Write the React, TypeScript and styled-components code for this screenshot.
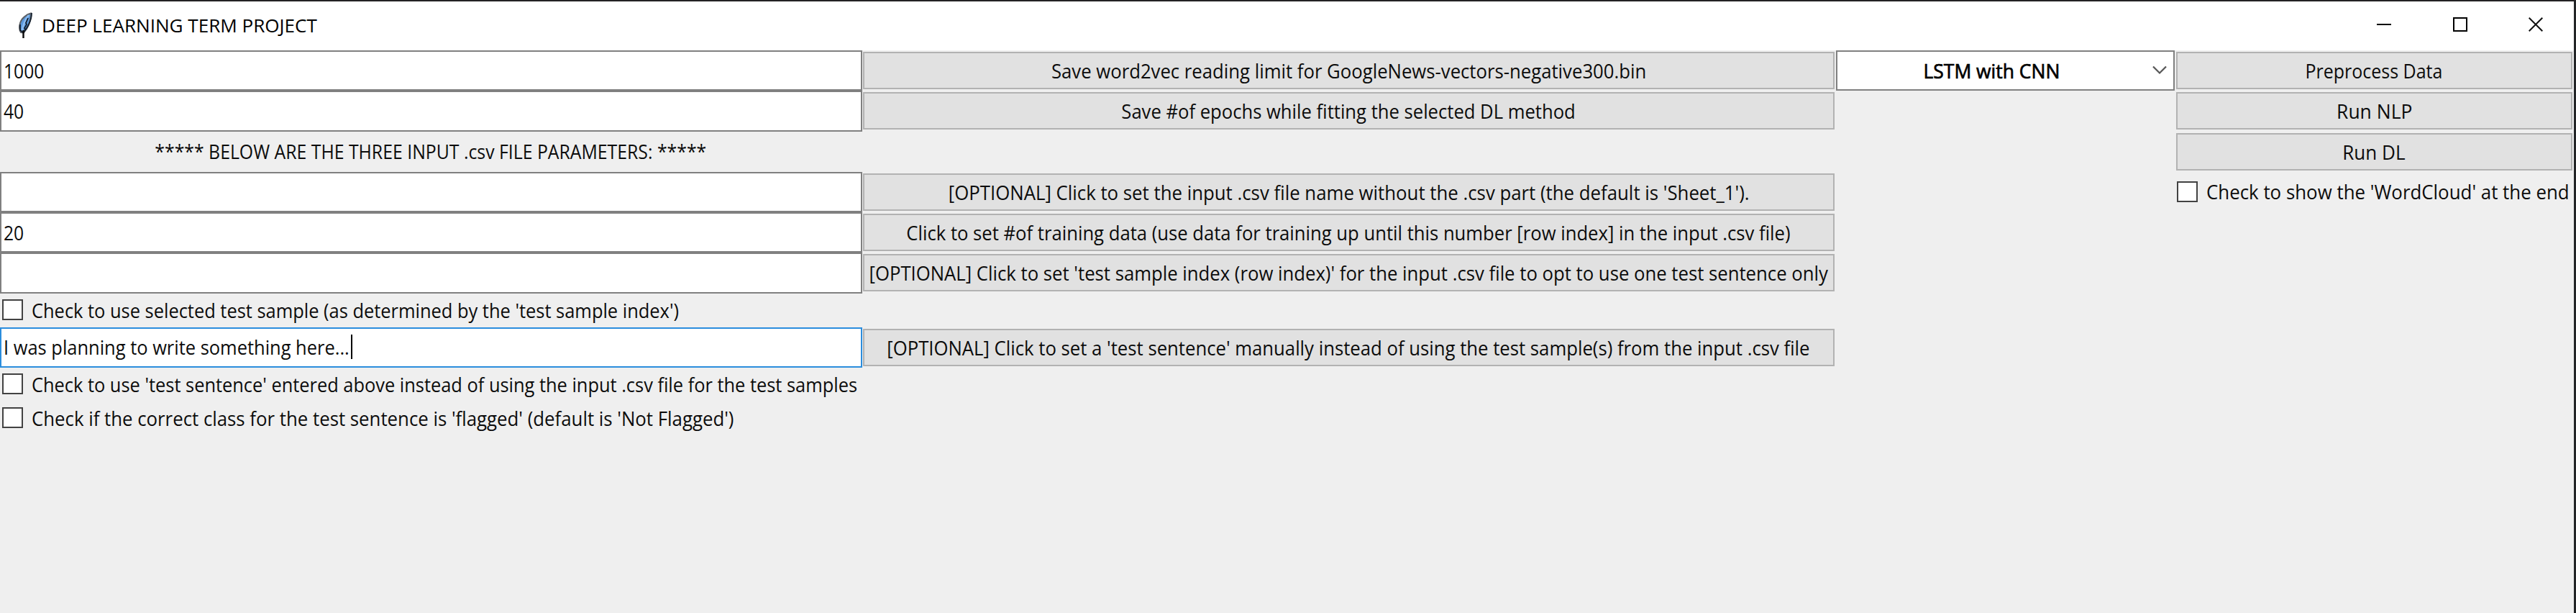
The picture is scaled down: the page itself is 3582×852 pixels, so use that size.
import React from 'react';
import styled, { createGlobalStyle } from 'styled-components';

const GlobalStyle = createGlobalStyle`
  body {
    margin: 0;
    background: #efefef;
    font-family: 'Open Sans', 'Noto Sans', sans-serif;
    font-size: 28px;
    color: #0c0c0c;
  }
`;

const Window = styled.main`
  box-sizing: border-box;
  width: 3582px;
  height: 852px;
  overflow: hidden;
  background: #efefef;
  border-top: 2px solid #232224;
  border-right: 3px solid #232527;
`;

const TitleBar = styled.header`
  display: flex;
  align-items: center;
  height: 68px;
  box-sizing: border-box;
  padding-left: 24px;
  background: #fff;
  color: #000;
  font-size: 26px;
`;

const Title = styled.h1`
  flex: 1;
  margin: 0 0 0 11px;
  padding-bottom: 3px;
  font-size: inherit;
  font-weight: 400;
  line-height: 36px;
`;

const Controls = styled.nav`
  display: flex;
  align-items: center;
  gap: 85.5px;
  padding: 0 43px 4px 0;
`;

const Glyph = styled.svg`
  display: block;
  fill: none;
`;

const Form = styled.section`
  display: grid;
  grid-template-columns: 1198.5px 1354px 471.5px 555px;
  grid-template-rows: repeat(6, 56.25px) 47px 56.25px 47px 47px;
`;

const Text = styled.span<{ $squeeze: number; $left?: boolean }>`
  display: inline-block;
  flex: none;
  white-space: nowrap;
  line-height: 36px;
  transform: scaleX(${(p) => p.$squeeze});
  transform-origin: ${(p) => (p.$left ? 'left' : 'center')};
`;

const Entry = styled.div<{ $row: number; $focused?: boolean }>`
  grid-column: 1;
  grid-row: ${(p) => p.$row};
  display: flex;
  align-items: center;
  box-sizing: border-box;
  padding: 0 0 1px 3px;
  background: #fff;
  border: 2px solid ${(p) => (p.$focused ? '#2b8ddd' : '#808080')};
`;

const EntryValue = styled.div<{ $width: number }>`
  display: flex;
  width: ${(p) => p.$width}px;
`;

const Caret = styled.i`
  width: 2px;
  height: 34px;
  background: #000;
`;

const Heading = styled.div`
  grid-column: 1;
  grid-row: 3;
  display: flex;
  align-items: center;
  justify-content: center;
  padding-bottom: 1px;
`;

const Button = styled.button<{ $column: number; $row: number }>`
  grid-column: ${(p) => p.$column};
  grid-row: ${(p) => p.$row};
  display: flex;
  align-items: center;
  justify-content: center;
  box-sizing: border-box;
  min-width: 0;
  margin: 2px 1.75px 2.25px 1.5px;
  padding: 0;
  background: #e1e1e1;
  border: 2px solid #b2b2b2;
  color: inherit;
  font: inherit;
`;

const Combo = styled.div`
  grid-column: 3;
  grid-row: 1;
  display: flex;
  align-items: center;
  box-sizing: border-box;
  margin: 0 0.5px;
  padding: 0 9px 1px 0;
  background: #fff;
  border: 2px solid #808080;
  color: #000;
`;

const ComboValue = styled.div`
  flex: 1;
  display: flex;
  justify-content: center;
  padding-right: 9px;
  -webkit-text-stroke: 0.7px #000;
`;

const Check = styled.label<{ $column: number; $row: number }>`
  grid-column: ${(p) => p.$column};
  grid-row: ${(p) => p.$row};
  display: flex;
  align-items: center;
  gap: 11.5px;
  min-width: 0;
  padding: 0 0 1px 3.4px;
`;

const Box = styled.span`
  flex: none;
  box-sizing: border-box;
  width: 29px;
  height: 29px;
  background: #fff;
  border: 2px solid #424242;
`;

const Feather = () => (
  <Glyph width="23" height="38" viewBox="0 0 23 38">
    <path d="M19 1.5C13 3 6 8 4 15c-1.500 5-1 10 1 13l3 .5c4-3 7-8 8.500-13C18 11 19.500 6 19 1.500z" fill="#5a98dc" stroke="#5c6066" strokeWidth="2" />
    <path d="M16 4c-4 5-8 13-9.500 23" stroke="#8dbdf0" strokeWidth="2.500" />
    <path d="M20 1c0 6-2 12-4 16l-3 5-4 6M15 8l-3 7 1 2-3 5 1 2-2 5M4 17v8l4 3" stroke="#14202e" strokeWidth="1.800" />
    <path d="M8.500 25v11" stroke="#0a0a0a" strokeWidth="2.400" />
  </Glyph>
);

const entries = [
  { row: 1, value: '1000', squeeze: 0.88 },
  { row: 2, value: '40', squeeze: 0.88 },
  { row: 4, value: '', squeeze: 1 },
  { row: 5, value: '20', squeeze: 0.88 },
  { row: 6, value: '', squeeze: 1 },
];

const buttons = [
  { column: 2, row: 1, squeeze: 0.918, label: 'Save word2vec reading limit for GoogleNews-vectors-negative300.bin' },
  { column: 2, row: 2, squeeze: 0.915, label: 'Save #of epochs while fitting the selected DL method' },
  { column: 2, row: 4, squeeze: 0.921, label: "[OPTIONAL] Click to set the input .csv file name without the .csv part (the default is 'Sheet_1')." },
  { column: 2, row: 5, squeeze: 0.916, label: 'Click to set #of training data (use data for training up until this number [row index] in the input .csv file)' },
  { column: 2, row: 6, squeeze: 0.918, label: "[OPTIONAL] Click to set 'test sample index (row index)' for the input .csv file to opt to use one test sentence only" },
  { column: 2, row: 8, squeeze: 0.918, label: "[OPTIONAL] Click to set a 'test sentence' manually instead of using the test sample(s) from the input .csv file" },
  { column: 4, row: 1, squeeze: 0.892, label: 'Preprocess Data' },
  { column: 4, row: 2, squeeze: 0.945, label: 'Run NLP' },
  { column: 4, row: 3, squeeze: 0.93, label: 'Run DL' },
];

const checks = [
  { column: 1, row: 7, squeeze: 0.908, label: "Check to use selected test sample (as determined by the 'test sample index')" },
  { column: 1, row: 9, squeeze: 0.907, label: "Check to use 'test sentence' entered above instead of using the input .csv file for the test samples" },
  { column: 1, row: 10, squeeze: 0.921, label: "Check if the correct class for the test sentence is 'flagged' (default is 'Not Flagged')" },
  { column: 4, row: 4, squeeze: 0.924, label: "Check to show the 'WordCloud' at the end" },
];

export default function App() {
  return (
    <>
      <GlobalStyle />
      <Window>
        <TitleBar>
          <Feather />
          <Title>
            <Text $squeeze={1.003} $left>DEEP LEARNING TERM PROJECT</Text>
          </Title>
          <Controls>
            <Glyph width="20" height="20" viewBox="0 0 20 20" stroke="#000" strokeWidth="2">
              <path d="M0 10h20" />
            </Glyph>
            <Glyph width="20" height="20" viewBox="0 0 20 20" stroke="#000" strokeWidth="2">
              <rect x="1" y="1" width="18" height="18" />
            </Glyph>
            <Glyph width="20" height="20" viewBox="0 0 20 20" stroke="#111" strokeWidth="2">
              <path d="M.7.7l18.600 18.600M19.300.7L.7 19.300" />
            </Glyph>
          </Controls>
        </TitleBar>
        <Form>
          {entries.map((e) => (
            <Entry key={e.row} $row={e.row}>
              <Text $squeeze={e.squeeze} $left>{e.value}</Text>
            </Entry>
          ))}
          <Heading>
            <Text $squeeze={0.886}>***** BELOW ARE THE THREE INPUT .csv FILE PARAMETERS: *****</Text>
          </Heading>
          <Entry $row={8} $focused>
            <EntryValue $width={482.5}>
              <Text $squeeze={0.909} $left>I was planning to write something here...</Text>
            </EntryValue>
            <Caret />
          </Entry>
          {buttons.map((b) => (
            <Button key={b.label} $column={b.column} $row={b.row}>
              <Text $squeeze={b.squeeze}>{b.label}</Text>
            </Button>
          ))}
          <Combo>
            <ComboValue>
              <Text $squeeze={0.945}>LSTM with CNN</Text>
            </ComboValue>
            <Glyph width="20" height="13" viewBox="0 0 20 13" stroke="#555" strokeWidth="2.200">
              <path d="M1 1.500l9 9 9-9" />
            </Glyph>
          </Combo>
          {checks.map((c) => (
            <Check key={c.label} $column={c.column} $row={c.row}>
              <Box />
              <Text $squeeze={c.squeeze} $left>{c.label}</Text>
            </Check>
          ))}
        </Form>
      </Window>
    </>
  );
}
